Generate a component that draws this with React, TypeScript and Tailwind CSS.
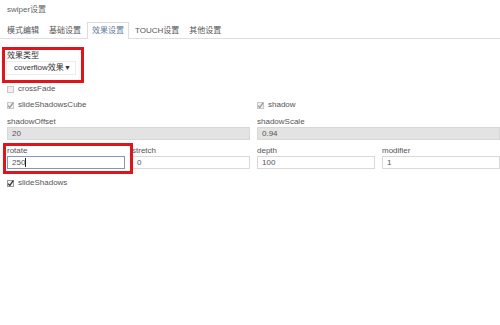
import React from "react";

const Check = ({ checked, dim }: { checked: boolean; dim?: boolean }) => (
  <span
    className={`inline-flex items-center justify-center w-[7px] h-[7px] border ${
      dim ? "border-[#c8c8c8] bg-[#f0f0f0]" : "border-[#999] bg-[#f4f4f4]"
    }`}
  >
    {checked && (
      <svg width="7" height="7" viewBox="0 0 7 7" className="overflow-visible">
        <path
          d="M1 3.6 L2.8 5.4 L6.2 0.6"
          fill="none"
          stroke={dim ? "#9a9a9a" : "#333"}
          strokeWidth="1.3"
        />
      </svg>
    )}
  </span>
);

const CheckRow = ({ label, checked, dim }: { label: string; checked: boolean; dim?: boolean }) => (
  <div className="flex items-center h-[12px] gap-[4px]">
    <Check checked={checked} dim={dim} />
    <span>{label}</span>
  </div>
);

const Field = ({
  label,
  value,
  grey,
  focus,
}: {
  label: string;
  value: string;
  grey?: boolean;
  focus?: boolean;
}) => (
  <div className="flex flex-col">
    <div className="h-[10px] leading-[10px]">{label}</div>
    <div
      className={`h-[13px] flex items-center pl-[4px] border ${
        grey ? "bg-[#e3e3e3] border-[#d8d8d8]" : focus ? "bg-white border-[#8797ad]" : "bg-white border-[#d9d9d9]"
      }`}
    >
      {value}
      {focus && <span className="inline-block w-[1px] h-[9px] bg-[#222]" />}
    </div>
  </div>
);

export default function App() {
  const tabs = ["模式编辑", "基础设置", "效果设置", "TOUCH设置", "其他设置"];
  return (
    <div
      className="relative w-[500px] h-[325px] bg-white overflow-hidden text-[8px] text-[#555]"
      style={{ fontFamily: '"Liberation Sans", Arial, "Noto Sans CJK SC", sans-serif' }}
    >
      <div className="h-[19px] flex items-center pl-[7px] text-[#666]">swiper设置</div>
      <div className="mt-[3px] h-[17px] flex border-b border-[#dedede] pl-[3px]">
        {tabs.map((t, i) => (
          <div
            key={t}
            className={`h-[17px] px-[4px] mr-[2px] flex items-center ${
              i === 2 ? "border border-b-0 border-[#dedede] bg-white text-[#5f7a9a] -mb-[1px]" : ""
            }`}
          >
            {t}
          </div>
        ))}
      </div>

      <div className="pl-[7px]">
        <div className="mt-[12px] h-[10px] leading-[10px] text-[#333]">效果类型</div>
        <div className="h-[14px] w-[70px] -ml-[1px] flex items-center justify-between pl-[7px] pr-[4px] border border-[#ececec] text-[#333]">
          <span>coverflow效果</span>
          <span className="text-[7px]">▼</span>
        </div>

        <div className="mt-[8px]">
          <CheckRow label="crossFade" checked={false} dim />
        </div>

        <div className="grid grid-cols-[118px_118px_118px_118px] gap-x-[7px] mt-[4px]">
          <div className="col-span-2">
            <CheckRow label="slideShadowsCube" checked dim />
          </div>
          <div className="col-span-2">
            <CheckRow label="shadow" checked dim />
          </div>
          <div className="col-span-2 mt-[6px]">
            <Field label="shadowOffset" value="20" grey />
          </div>
          <div className="col-span-2 mt-[6px]">
            <Field label="shadowScale" value="0.94" grey />
          </div>
          <div className="mt-[6px]">
            <Field label="rotate" value="250" focus />
          </div>
          <div className="mt-[6px]">
            <Field label="stretch" value="0" />
          </div>
          <div className="mt-[6px]">
            <Field label="depth" value="100" />
          </div>
          <div className="mt-[6px]">
            <Field label="modifier" value="1" />
          </div>
        </div>

        <div className="mt-[8px]">
          <CheckRow label="slideShadows" checked />
        </div>
      </div>

      <div className="absolute left-[2px] top-[47px] w-[82px] h-[36px] border-[3px] border-[#e0141b]" />
      <div className="absolute left-[3px] top-[143px] w-[130px] h-[31px] border-[3px] border-[#e0141b]" />
    </div>
  );
}
